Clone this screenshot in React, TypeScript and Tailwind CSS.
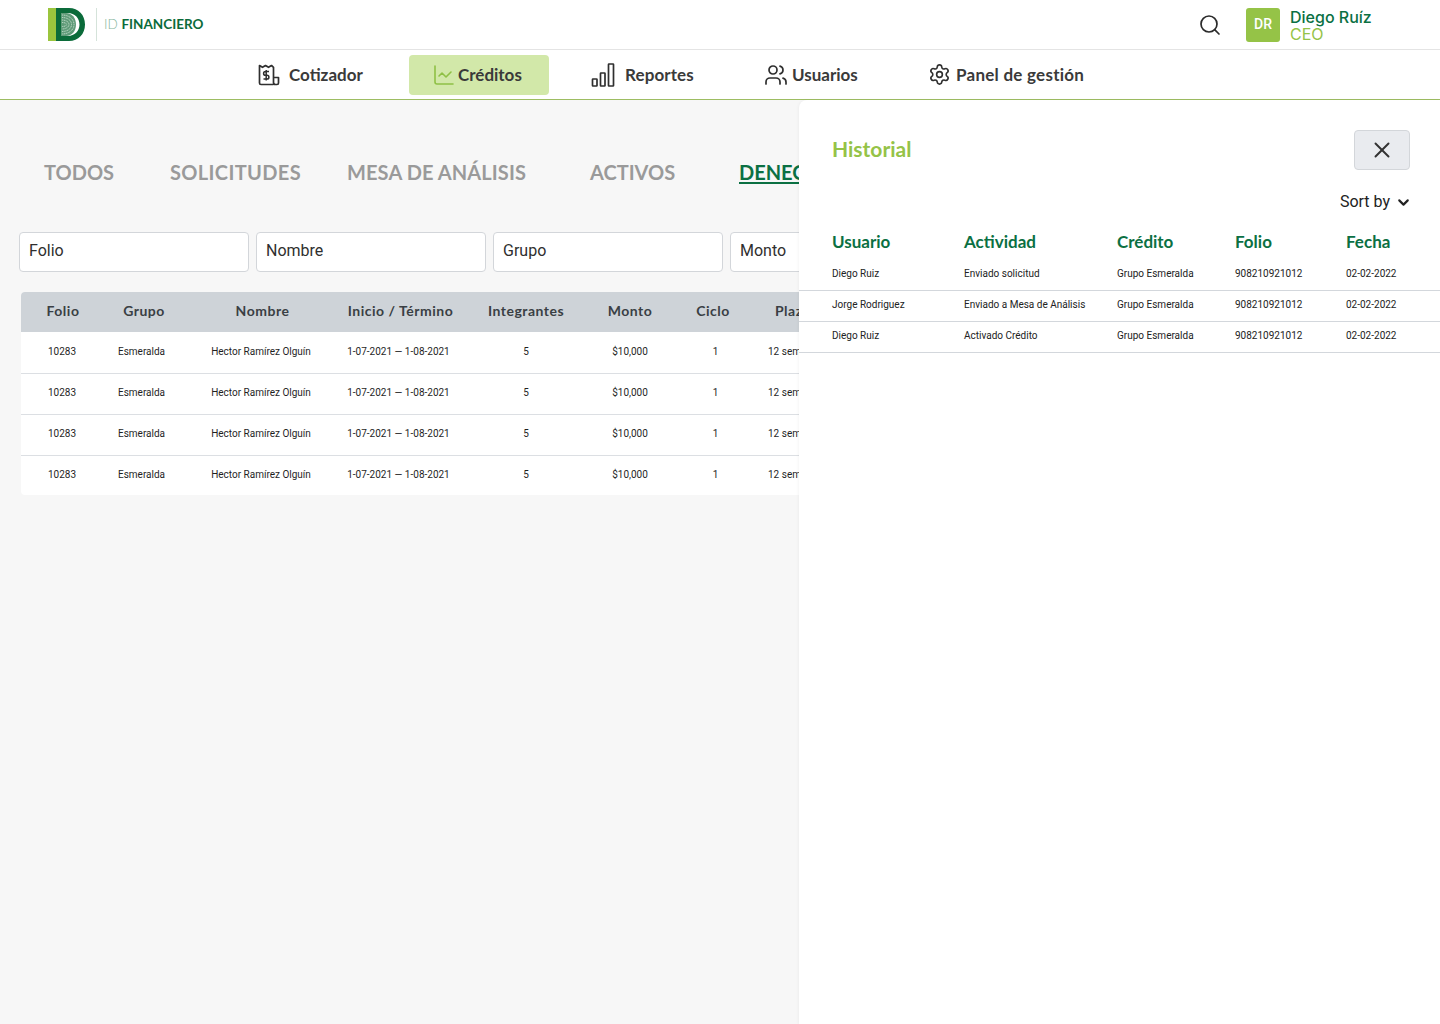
import { ChartLine, Settings, Users, Search, X, ChevronDown } from "lucide-react";

const heading = "font-['Lato','Noto_Sans',sans-serif]";
const body = "font-['Roboto','Liberation_Sans',sans-serif]";
const headCols = "grid grid-cols-[84px_78px_159px_117px_134px_74px_92px_68px_1fr]";
const cols = "grid grid-cols-[82px_77px_162px_113px_142px_66px_105px_46px_1fr]";
const headers = ["Folio", "Grupo", "Nombre", "Inicio / Término", "Integrantes", "Monto", "Ciclo", "Plazo"];
const row = ["10283", "Esmeralda", "Hector Ramírez Olguín", "1-07-2021 — 1-08-2021", "5", "$10,000", "1", "12 semanas"];
const hist = [
  ["Diego Ruiz", "Enviado solicitud"],
  ["Jorge Rodriguez", "Enviado a Mesa de Análisis"],
  ["Diego Ruiz", "Activado Crédito"],
];
const histCols = "grid grid-cols-[132px_153px_118px_111px_1fr]";

function Logo() {
  return (
    <svg width="38" height="34" viewBox="0 0 38 34" aria-hidden="true">
      <rect x="0" y="0" width="8" height="33" fill="#9bc53d" />
      <rect x="8" y="0" width="2" height="33" fill="#0b6b3a" />
      <path d="M8 0h13c9.500 0 16 7 16 16.500S30.500 33 21 33H8zM13 5v23h7c6.500 0 11.500-5 11.500-11.500S26.500 5 20 5z" fill="#0b6b3a" fillRule="evenodd" />
      <path d="M13 5h5c6 0 10 5 10 11.500S24 28 18 28h-5z" fill="#5f9b78" />
      <path d="M14 7c6 0 12 3.500 12 9.500S20 26 14 26M14 9.500c5 0 9.500 2.500 9.500 7S19 23.500 14 23.500M14 12c3 0 7 1.500 7 4.500S17 21 14 21M14 14.500c2 0 4.500.5 4.500 2S16 18.500 14 18.500" fill="none" stroke="#cfe3d5" strokeWidth="0.8" strokeDasharray="1.2 0.6" />
    </svg>
  );
}

function Receipt() {
  return (
    <svg width="22" height="22" viewBox="0 0 22 22" fill="none" stroke="#2f2f2f" strokeWidth="1.7" strokeLinejoin="round" aria-hidden="true">
      <path d="M15.500 20.500H3a1.500 1.500 0 0 1-1.500-1.500V1.500l3 1.800 3-1.800 3 1.800 3-1.800 2 1.800V18.500a2 2 0 0 0 2 2h1.500a1.500 1.500 0 0 0 1.500-1.500v-5.500h-5" />
      <path d="M11 7.500H7.500a1.600 1.600 0 0 0 0 3.800h1.500a1.600 1.600 0 0 1 0 3.800H5.500M8.200 6v10.500" strokeWidth="1.5" />
    </svg>
  );
}

function Bars() {
  return (
    <svg width="24" height="24" viewBox="0 0 24 24" fill="none" stroke="#2f2f2f" strokeWidth="1.7" aria-hidden="true">
      <rect x="1.500" y="16" width="4.500" height="7" rx="0.5" />
      <rect x="9.500" y="10" width="4.500" height="13" rx="0.5" />
      <rect x="17.500" y="1" width="5" height="22" rx="0.5" />
    </svg>
  );
}

export default function App() {
  return (
    <div className={`relative h-[1024px] w-[1440px] overflow-hidden bg-[#f7f7f7] ${body}`}>
      <header className="flex h-[50px] items-center border-b border-[#e4e4e4] bg-white pl-[48px] pr-[68px]">
        <Logo />
        <div className="ml-[10px] h-[33px] w-px bg-[#d5e3da]" />
        <div className={`ml-[7px] text-[13.500px] text-[#0b6b3a] ${heading}`}>
          <span className="font-light text-[#86b59c]">ID </span>
          <span className="font-bold">FINANCIERO</span>
        </div>
        <Search className="ml-auto" size={24} color="#2b2b2b" strokeWidth={1.7} />
        <div className="ml-[24px] flex h-[34px] w-[34px] items-center justify-center rounded-[3px] bg-[#95c347] text-[14px] font-medium text-white">DR</div>
        <div className="ml-[10px] mt-[3px] flex w-[82px] flex-col whitespace-nowrap font-['Inter',sans-serif] text-[16px] leading-[17px]">
          <span className="font-medium text-[#0b7043]">Diego Ruíz</span>
          <span className="text-[#95c347]">CEO</span>
        </div>
      </header>

      <nav className={`flex h-[50px] items-center border-b border-[#9dbd62] bg-white pl-[258px] text-[17px] font-bold text-[#3a3a3a] ${heading}`}>
        <div className="flex w-[151px] items-center gap-[9px]"><Receipt /><span>Cotizador</span></div>
        <div className="flex h-[40px] w-[140px] items-center gap-[2px] rounded-[4px] bg-[#d2e8a9] pl-[23px]">
          <ChartLine size={24} color="#8fc045" strokeWidth={1.6} /><span>Créditos</span>
        </div>
        <div className="ml-[42px] flex w-[173px] items-center gap-[10px]"><Bars /><span className="tracking-[0.1px]">Reportes</span></div>
        <div className="flex w-[164px] items-center gap-[4px]"><Users size={24} color="#2f2f2f" strokeWidth={1.7} /><span>Usuarios</span></div>
        <div className="flex items-center gap-[5px]"><Settings size={23} color="#2f2f2f" strokeWidth={1.7} /><span className="tracking-[0.25px]">Panel de gestión</span></div>
      </nav>

      <main>
        <div className={`flex h-[132px] items-center whitespace-nowrap pl-[44px] pt-[12px] text-[20px] font-bold text-[#9a9a9a] ${heading}`}>
          <span className="w-[126px]">TODOS</span>
          <span className="w-[177px] tracking-[0.35px]">SOLICITUDES</span>
          <span className="w-[243px] tracking-[0.1px]">MESA DE ANÁLISIS</span>
          <span className="w-[149px]">ACTIVOS</span>
          <span className="text-[#0b7043] underline underline-offset-2">DENEGADOS</span>
        </div>

        <div className="flex gap-[7px] pl-[19px]">
          {["Folio", "Nombre", "Grupo", "Monto"].map((f) => (
            <div key={f} className="flex h-[40px] w-[230px] items-center rounded-[4px] border border-[#d3d6da] bg-white pb-[2px] pl-[9px] text-[16px] text-[#2f2f2f]">{f}</div>
          ))}
        </div>

        <div className="ml-[21px] mt-[20px] w-[1400px] overflow-hidden rounded-[4px] bg-white">
          <div className={`${headCols} h-[40px] items-center bg-[#ced3d8] pb-[4px] text-center text-[14px] font-bold tracking-[0.5px] text-[#3a3f44] ${heading}`}>
            {headers.map((h) => <span key={h} className="whitespace-nowrap">{h}</span>)}
          </div>
          <div className="pt-px">
            {[0, 1, 2, 3].map((i) => (
              <div key={i} className={`${cols} h-[41px] items-center border-b border-[#dcdfe3] pb-[4px] text-center text-[10px] text-[#1f1f1f] last:h-[39px] last:border-b-0 last:pb-[2px]`}>
                {row.map((c, j) => <span key={j} className="whitespace-nowrap">{c}</span>)}
              </div>
            ))}
          </div>
        </div>
      </main>

      <aside className="absolute bottom-0 left-[799px] top-[100px] w-[641px] rounded-tl-[8px] bg-white shadow-[-1px_0_3px_rgba(0,0,0,0.04)]">
        <div className="flex items-start justify-between pl-[33px] pr-[30px] pt-[30px]">
          <h2 className={`mt-[5px] text-[21px] font-bold leading-[28px] text-[#95c347] ${heading}`}>Historial</h2>
          <button className="flex h-[40px] w-[56px] items-center justify-center rounded-[4px] border border-[#d3d6da] bg-[#e9ebef]">
            <X size={26} color="#333" strokeWidth={1.8} />
          </button>
        </div>
        <div className="mt-[22px] flex items-center justify-end gap-[5px] pr-[28px] text-[16px] leading-[20px] text-[#222]">
          Sort by <ChevronDown size={17} color="#222" strokeWidth={3} />
        </div>
        <div className={`${histCols} mt-[19px] pl-[33px] text-[17px] font-bold leading-[22px] text-[#0b7043] ${heading}`}>
          {["Usuario", "Actividad", "Crédito", "Folio", "Fecha"].map((h) => <span key={h}>{h}</span>)}
        </div>
        <div className="mt-[7px]">
          {hist.map(([u, a]) => (
            <div key={u + a} className={`${histCols} h-[31px] items-center border-b border-[#d3d7dc] pl-[33px] pb-[3px] text-[10px] text-[#222]`}>
              <span>{u}</span><span>{a}</span><span>Grupo Esmeralda</span><span>908210921012</span><span>02-02-2022</span>
            </div>
          ))}
        </div>
      </aside>
    </div>
  );
}
